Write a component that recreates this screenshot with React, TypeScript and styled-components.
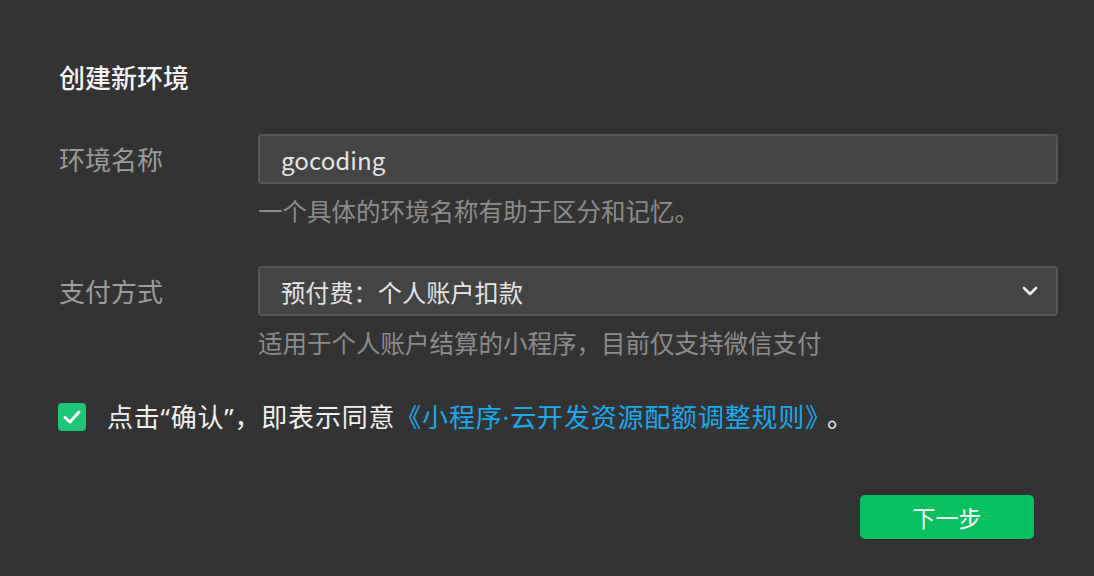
import React from "react";
import styled, { createGlobalStyle } from "styled-components";

const Global = createGlobalStyle`
  html, body { margin: 0; padding: 0; background: #333333; }
  body { font-family: "Noto Sans CJK SC", "Noto Sans", sans-serif; }
  * { box-sizing: border-box; }
`;

const Page = styled.div`
  width: 1094px;
  height: 576px;
  background: #333333;
  padding: 59px 36px 0 59px;
  display: flex;
  flex-direction: column;
`;

const Title = styled.h1`
  margin: 0;
  font-size: 26px;
  line-height: 36px;
  font-weight: 500;
  color: #f4f4f4;
`;

const Row = styled.div<{ $top: number }>`
  display: grid;
  grid-template-columns: 199px 800px;
  margin-top: ${(p) => p.$top}px;
`;

const Label = styled.div`
  font-size: 26px;
  line-height: 50px;
  color: #9b9b9b;
`;

const Field = styled.div`
  display: flex;
  flex-direction: column;
`;

const Box = styled.div`
  height: 50px;
  border: 2px solid #575757;
  border-radius: 4px;
  background: #444444;
  display: flex;
  align-items: center;
  justify-content: space-between;
  padding: 0 18px 0 21px;
  font-size: 24.2px;
  color: #e4e4e4;
`;

const Hint = styled.div`
  margin-top: 10px;
  font-size: 24.5px;
  line-height: 34px;
  color: #8c8c8c;
`;

const AgreeRow = styled.div`
  display: flex;
  align-items: center;
  margin-top: 39px;
  margin-left: -1px;
`;

const Check = styled.span`
  width: 28px;
  height: 28px;
  border-radius: 4px;
  background: #1ec677;
  display: flex;
  align-items: center;
  justify-content: center;
  margin-right: 21px;
`;

const AgreeText = styled.span`
  font-size: 26px;
  letter-spacing: 0.8px;
  line-height: 34px;
  color: #f0f0f0;
`;

const Narrow = styled.span`
  font-family: "Noto Sans", "DejaVu Sans", sans-serif;
`;

const Link = styled.span`
  color: #1aa8ee;
`;

const Period = styled.span`
  margin-left: 8px;
`;

const Footer = styled.div`
  display: flex;
  justify-content: flex-end;
  margin-top: 61px;
  padding-right: 24px;
`;

const Button = styled.button`
  width: 174px;
  height: 44px;
  border: none;
  border-radius: 5px;
  background: #07c160;
  color: #ffffff;
  font-family: inherit;
  font-size: 23px;
  cursor: pointer;
`;

export default function App() {
  return (
    <>
      <Global />
      <Page>
        <Title>创建新环境</Title>
        <Row $top={39}>
          <Label>环境名称</Label>
          <Field>
            <Box>gocoding</Box>
            <Hint>一个具体的环境名称有助于区分和记忆。</Hint>
          </Field>
        </Row>
        <Row $top={38}>
          <Label>支付方式</Label>
          <Field>
            <Box>
              <span>预付费：个人账户扣款</span>
              <svg width="16" height="10" viewBox="0 0 16 10">
                <path d="M2 2 L8 8 L14 2" fill="none" stroke="#eeeeee" strokeWidth="2.6" strokeLinecap="round" strokeLinejoin="round" />
              </svg>
            </Box>
            <Hint>适用于个人账户结算的小程序，目前仅支持微信支付</Hint>
          </Field>
        </Row>
        <AgreeRow>
          <Check>
            <svg width="20" height="16" viewBox="0 0 20 16">
              <path d="M3 8.5 L8 13 L17 3" fill="none" stroke="#ffffff" strokeWidth="3" strokeLinecap="round" strokeLinejoin="round" />
            </svg>
          </Check>
          <AgreeText>
            点击<Narrow>“</Narrow>确认<Narrow>”</Narrow>，即表示同意
            <Link>
              《小程序<Narrow>·</Narrow>云开发资源配额调整规则》
            </Link>
            <Period>。</Period>
          </AgreeText>
        </AgreeRow>
        <Footer>
          <Button>下一步</Button>
        </Footer>
      </Page>
    </>
  );
}
